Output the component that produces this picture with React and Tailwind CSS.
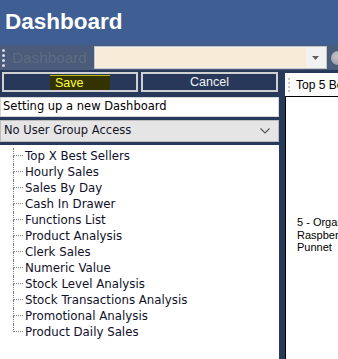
import React from "react";

const items = [
  "Top X Best Sellers",
  "Hourly Sales",
  "Sales By Day",
  "Cash In Drawer",
  "Functions List",
  "Product Analysis",
  "Clerk Sales",
  "Numeric Value",
  "Stock Level Analysis",
  "Stock Transactions Analysis",
  "Promotional Analysis",
  "Product Daily Sales",
];

function Gripper({ light }) {
  return (
    <div className="flex flex-col gap-[2px]">
      {[0, 1, 2, 3].map((i) => (
        <div
          key={i}
          className={
            light
              ? "w-[2px] h-[2px] bg-[#c8c8c8]"
              : "w-[3px] h-[3px] rounded-full bg-[#d8dce4]"
          }
        />
      ))}
    </div>
  );
}

export default function App() {
  return (
    <div className="w-[338px] h-[359px] overflow-hidden flex flex-col bg-[#283a5c]">
      {/* Header */}
      <div className="h-[45px] shrink-0 bg-[#3f5f94] flex items-center pl-[5px]">
        <span
          className="text-white font-bold text-[22.5px] leading-none"
          style={{ fontFamily: '"Liberation Sans", Arial, sans-serif' }}
        >
          Dashboard
        </span>
      </div>

      {/* Toolbar */}
      <div className="h-[25px] shrink-0 bg-[#4a5b7b] flex items-center">
        <div className="ml-[2px] w-[4px] shrink-0">
          <Gripper />
        </div>
        <span
          className="ml-[6px] w-[82px] shrink-0 text-[15.3px] leading-none text-[#5f6b80]"
          style={{ fontFamily: '"Liberation Sans", Arial, sans-serif' }}
        >
          Dashboard
        </span>
        <div className="w-[233px] shrink-0 h-[23px] border border-[#c4c4c4] bg-[#f2f2f2] flex p-[1px]">
          <div className="flex-1 bg-[#f8ecd9]" />
          <div className="w-[19px] flex items-center justify-center">
            <svg width="7" height="4" viewBox="0 0 7 4">
              <path d="M0 0 H7 L3.5 4 Z" fill="#606060" />
            </svg>
          </div>
        </div>
        <div className="ml-[4px] w-[14px] h-[14px] shrink-0 rounded-full bg-[radial-gradient(circle_at_40%_40%,#c4c4cc,#8e8e98)]" />
      </div>

      {/* Body */}
      <div className="flex-1 flex min-h-0">
        {/* Left column */}
        <div className="w-[279px] shrink-0 flex flex-col pt-[2px]">
          <div className="flex gap-[3px] pl-[2px] h-[20px]">
            <button
              className="w-[136px] h-[20px] border-2 border-[#d0d0d0] bg-[#28385a] flex items-center p-0"
              style={{ fontFamily: '"Liberation Sans", Arial, sans-serif' }}
            >
              <span className="ml-[46px] w-[60px] h-[15px] bg-[#333300] border-t border-[#b8b800] text-[#ffff33] text-[12.5px] leading-[14px] text-left pl-[5px]">
                Save
              </span>
            </button>
            <button
              className="w-[137px] h-[20px] border-2 border-[#d0d0d0] bg-[#28385a] flex items-center justify-center text-[#f4f4f4] text-[12.5px] leading-none"
              style={{ fontFamily: '"Liberation Sans", Arial, sans-serif' }}
            >
              Cancel
            </button>
          </div>

          <div
            className="mt-[5px] h-[20px] bg-white border border-[#d6d6d6] flex items-center pl-[2px] text-[11.5px] text-black"
            style={{ fontFamily: '"DejaVu Sans", Verdana, sans-serif' }}
          >
            Setting up a new Dashboard
          </div>

          <div
            className="mt-[3px] h-[22px] bg-[#e5e5e5] border border-[#bdbdbd] flex items-center justify-between pl-[3px] pr-[8px] text-[11.5px] text-[#14142a]"
            style={{ fontFamily: '"DejaVu Sans", Verdana, sans-serif' }}
          >
            <span>No User Group Access</span>
            <svg width="10" height="6" viewBox="0 0 10 6">
              <path d="M0.5 0.5 L5 5 L9.5 0.5" fill="none" stroke="#555" strokeWidth="1.1" />
            </svg>
          </div>

          <div
            className="mt-[3px] flex-1 bg-white pt-[3px] pl-[13px]"
            style={{ fontFamily: '"DejaVu Sans", Verdana, sans-serif' }}
          >
            {items.map((label, i) => (
              <div key={label} className="flex h-[16px]">
                <div className="w-[10px] flex flex-col">
                  <div className="h-[8px] border-l border-b border-dotted border-[#808080]" />
                  <div
                    className={
                      i === items.length - 1
                        ? "h-[8px]"
                        : "h-[8px] border-l border-dotted border-[#808080]"
                    }
                  />
                </div>
                <span className="ml-[2px] text-[11.8px] leading-[16px] text-[#10102a] whitespace-nowrap">
                  {label}
                </span>
              </div>
            ))}
          </div>
        </div>

        {/* Right column */}
        <div className="flex-1 flex flex-col pl-[6px] pt-[3px] min-w-0">
          <div
            className="h-[23px] bg-[#fbfbfb] flex items-center pl-[3px] whitespace-nowrap overflow-hidden"
            style={{ fontFamily: '"Liberation Sans", Arial, sans-serif' }}
          >
            <Gripper light />
            <span className="ml-[6px] text-[12px] leading-none text-black">Top 5 Best Sellers</span>
          </div>
          <div
            className="flex-1 bg-white border-t border-l border-black pt-[119px] pl-[11px] text-[11px] leading-[12.5px] text-black whitespace-nowrap overflow-hidden"
            style={{ fontFamily: '"Liberation Sans", Arial, sans-serif' }}
          >
            <div>5 - Organic</div>
            <div>Raspberry</div>
            <div>Punnet</div>
          </div>
        </div>
      </div>
    </div>
  );
}
